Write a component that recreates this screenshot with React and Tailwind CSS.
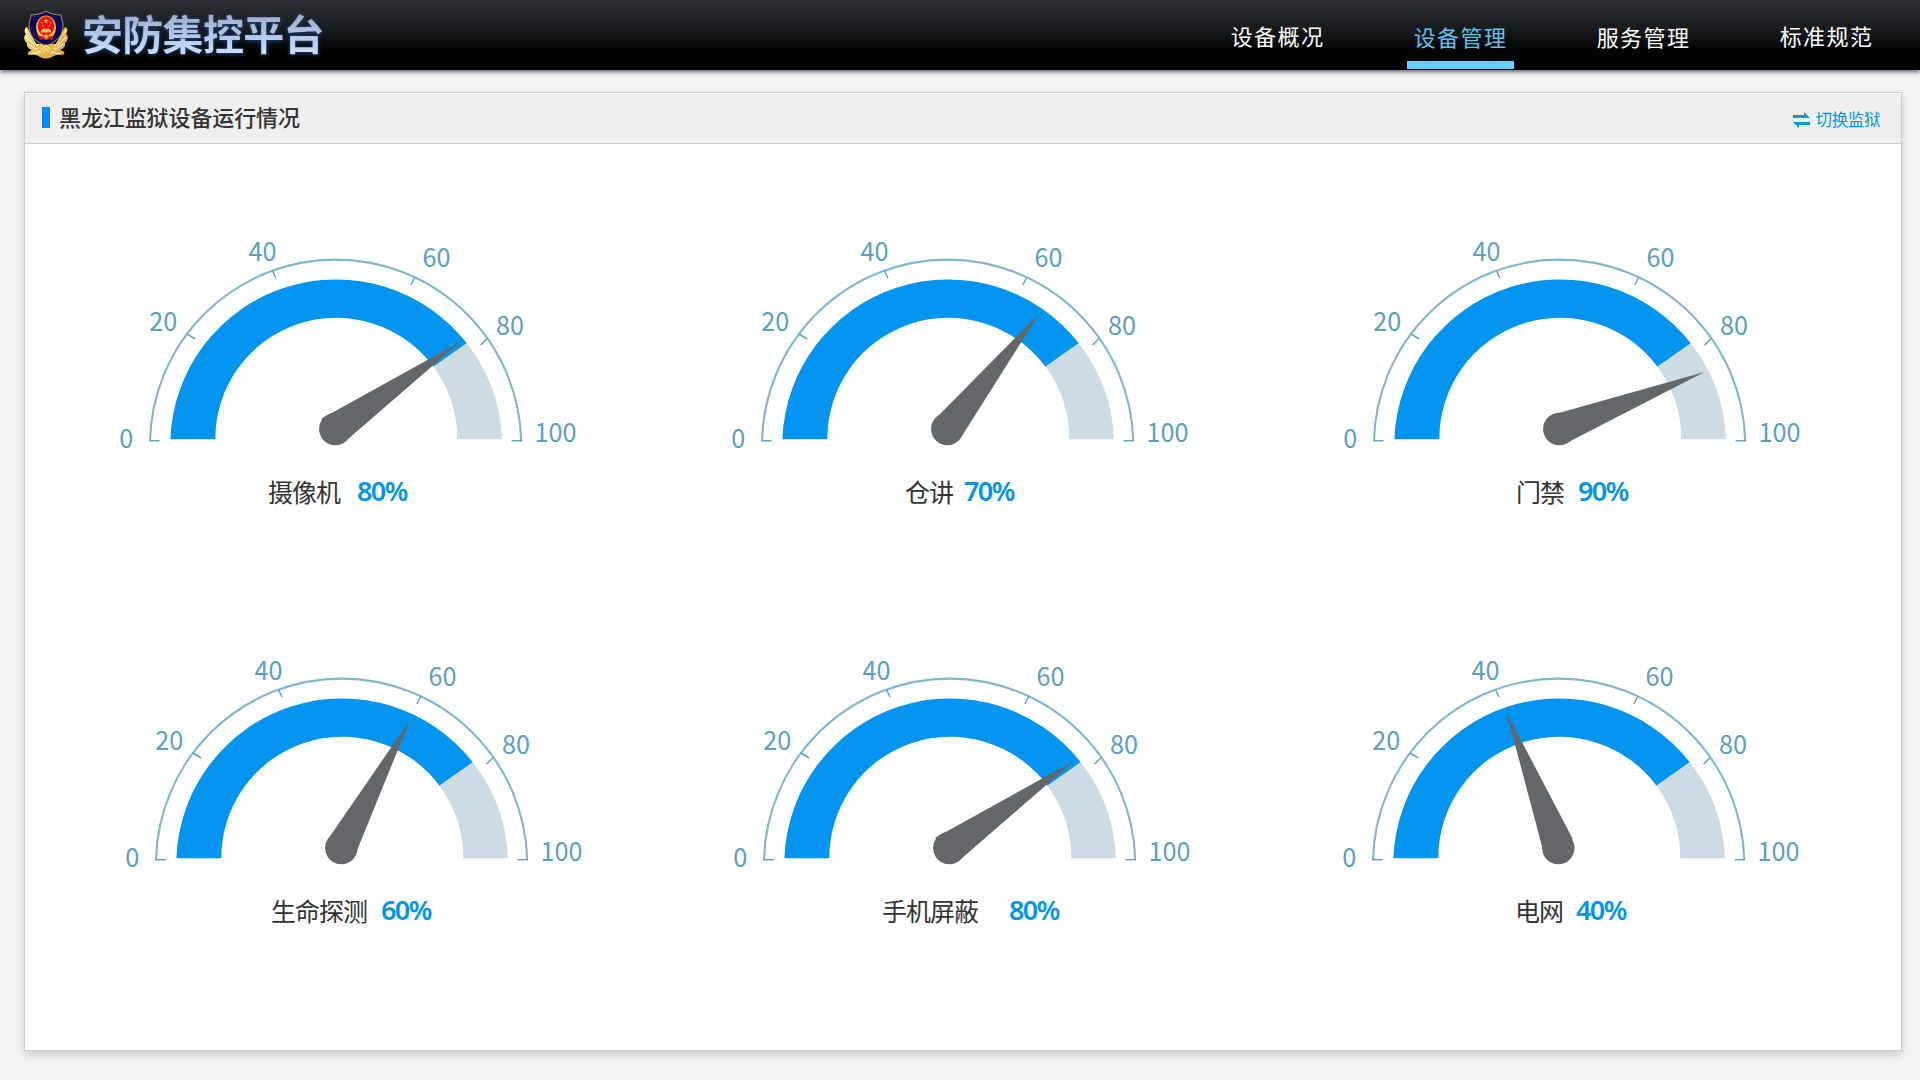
const NAV = [
  { label: '设备概况', dy: 'pt-[19px]' },
  { label: '设备管理', active: true, dy: 'pt-[20px]' },
  { label: '服务管理', dy: 'pt-[20px]' },
  { label: '标准规范', dy: 'pt-[19px]' },
];

const GAUGES = [
  { name: '摄像机', value: '80%', shift: 'ml-0', pad: 'pl-[168px]', gap: 'gap-[17px]', needle: 'M221.3 198.7 L360 122 L247.5 219.5 Z' },
  { name: '仓讲', value: '70%', shift: 'ml-0', pad: 'pl-[193px]', gap: 'gap-[11px]', needle: 'M224.6 197.5 L327.3 93.5 L250.3 215.5 Z' },
  { name: '门禁', value: '90%', shift: 'ml-0', pad: 'pl-[192px]', gap: 'gap-[14px]', needle: 'M234 193.2 L380.5 152 L245 221.8 Z' },
  { name: '生命探测', value: '60%', shift: 'ml-[6px]', pad: 'pl-[165px]', gap: 'gap-[14px]', needle: 'M223 198.8 L304 81 L251.4 210.5 Z' },
  { name: '手机屏蔽', value: '80%', shift: 'ml-[2px]', pad: 'pl-[168px]', gap: 'gap-[31px]', needle: 'M221.3 198.7 L360 122 L247.5 219.5 Z' },
  { name: '电网', value: '40%', shift: '-ml-[1px]', pad: 'pl-[192px]', gap: 'gap-[13px]', needle: 'M219.8 210.5 L183.5 73.5 L249.8 200 Z' },
];

const TICKS = [
  { t: '0', x: 19.2, y: 227.6, w: 14 },
  { t: '20', x: 49.3, y: 110.6, w: 28 },
  { t: '40', x: 148.5, y: 41, w: 28 },
  { t: '60', x: 322.6, y: 47, w: 28 },
  { t: '80', x: 396, y: 114.6, w: 28 },
  { t: '100', x: 434.4, y: 221.6, w: 42 },
];

function Emblem() {
  return (
    <svg className="block h-[50px] w-[46px]" viewBox="0 0 46 50">
      <defs>
        <linearGradient id="gold" x1="0" y1="0" x2="1" y2="1">
          <stop offset="0" stopColor="#fff0b0" />
          <stop offset="0.5" stopColor="#f0c050" />
          <stop offset="1" stopColor="#d79d3c" />
        </linearGradient>
      </defs>
      <path d="M4 17 C1 18 1 22 3 24 C0 26 1 31 4 33 C3 35 5 39 9 40 C4 42 4 44 6 45 C11 44 14 45 17 47 C21 49 25 49 29 47 C32 45 36 44 40 45 C43 43 41 41 37 40 C41 39 43 35 42 33 C45 31 46 26 43 24 C45 21 45 18 42 17 L33 34 L13 34 Z" fill="url(#gold)" />
      <path d="M3 20 L14 36 M3 27 L15 39 M6 34 L17 42 M43 20 L32 36 M43 27 L31 39 M40 34 L29 42 M8 44 L19 42 M38 44 L27 42" stroke="#fff3c4" strokeWidth="1.1" fill="none" />
      <path d="M5 23 L14 38 M5 31 L16 41 M41 23 L32 38 M41 31 L30 41" stroke="#b9781f" strokeWidth=".5" fill="none" />
      <path d="M23 1 C19 4 12 5 8 5 C8 9 6 11 6 15 C6 25 11 31 23 36 C35 31 40 25 40 15 C40 11 38 9 38 5 C34 5 27 4 23 1 Z" fill="#06065c" stroke="#c99643" strokeWidth="1" />
      <ellipse cx="23" cy="17.5" rx="10" ry="12" fill="#f2c04c" />
      <ellipse cx="23" cy="16" rx="8.3" ry="9.7" fill="#f20d0d" />
      <path d="M23 8 L23.7 10 L25.6 10.1 L24.1 11.4 L24.6 13.3 L23 12.2 L21.4 13.3 L21.9 11.4 L20.4 10.1 L22.3 10 Z" fill="#f8c648" />
      <path d="M17.8 12 h1.3 v1.3 h-1.3 Z M27 12 h1.3 v1.3 h-1.3 Z M19 15 h1.2 v1.2 h-1.2 Z M25.9 15 h1.2 v1.2 h-1.2 Z" fill="#f8c648" />
      <path d="M18 20.5 L20 18.8 H26 L28 20.5 V22.5 H18 Z" fill="#f8c648" />
      <path d="M15 25 C18 27 28 27 31 25 L29 30 C27 28.5 19 28.5 17 30 Z" fill="#e01512" />
      <circle cx="23" cy="26.5" r="2.4" fill="#f5cc55" stroke="#d6221a" strokeWidth=".8" />
      <path d="M16 39 L23 34 L30 39 L27 43 H19 Z" fill="#e9b94c" />
      <path d="M18 39 L23 36 L28 39 M20 41.5 L23 39 L26 41.5" stroke="#fff0b8" strokeWidth="1" fill="none" />
    </svg>
  );
}

function Gauge({ name, value, shift, pad, gap, needle }) {
  return (
    <div className={`w-[500px] ${shift}`}>
      <svg className="block h-[240px] w-[500px]" viewBox="0 0 500 240">
        <path d="M115.3 219.3 A121 121 0 0 1 333.5 146.7 L366.8 123.3 A165.8 165.8 0 0 0 70.4 219.3 Z" fill="#0294ef" />
        <path d="M357.2 219.3 A121 121 0 0 0 333.5 146.7 L366.8 123.3 A165.8 165.8 0 0 1 401.9 219.3 Z" fill="#cddbe5" />
        <g fill="none" stroke="#62a4c1">
          <path d="M50 221 A185.65 185.65 0 0 1 421.2 221" strokeWidth="2.1" strokeOpacity="0.8" />
          <path d="M49.2 220.7 H59.5 M411.5 220.7 H422" strokeWidth="1.6" />
          <path d="M87 114 L95.3 119 M172.3 50.5 L176 58 M314.5 58 L310.8 65 M387 118.7 L380.5 125" strokeWidth="1.5" />
        </g>
        <g fill="#5b9fbe" fontSize="26" fontFamily='"Noto Sans CJK SC", sans-serif'>
          {TICKS.map((k) => (
            <text key={k.t} x={k.x} y={k.y} textLength={k.w} lengthAdjust="spacingAndGlyphs">{k.t}</text>
          ))}
        </g>
        <g fill="#636769">
          <circle cx="235.3" cy="209" r="16.2" />
          <path d={needle} />
        </g>
      </svg>
      <div className={`flex h-[62px] items-center ${pad} ${gap}`}>
        <span className="text-[25px] leading-[60px] tracking-[-1px] text-[#333333]">{name}</span>
        <span className="font-['Noto_Sans','Noto_Sans_CJK_SC',sans-serif] text-[27px] leading-[60px] font-semibold tracking-[-1.6px] text-[#0294ef]">{value}</span>
      </div>
    </div>
  );
}

export default function App() {
  return (
    <div className="flex h-[1080px] w-[1920px] flex-col overflow-hidden bg-[#f3f3f3] font-['Noto_Sans_CJK_SC',sans-serif]">
      <header className="flex h-[70px] shrink-0 bg-linear-to-b from-[#2e3236] via-[#131517] to-black pl-[23px] shadow-[0_2px_4px_#5f6878]">
        <div className="pt-[10px]"><Emblem /></div>
        <h1 className="ml-[13px] h-[70px] bg-linear-to-b from-[#a3b1cf] from-25% via-[#b4c6e6] via-50% to-[#c9dcfb] to-75% bg-clip-text text-[41px] leading-[65px] font-bold tracking-[-0.7px] text-transparent drop-shadow-[0_1px_2px_#17467e]">安防集控平台</h1>
        <nav className="ml-auto flex gap-[76px] pr-[40px]">
          {NAV.map((n) => (
            <a key={n.label} className={`flex h-[70px] w-[107px] flex-col items-center whitespace-nowrap ${n.dy} text-[22px] leading-[32px] tracking-[1.4px] ${n.active ? 'text-[#5bc5f2]' : 'text-white'}`}>
              {n.label}
              {n.active && <i className="mt-[9px] block h-[8px] w-[107px] shrink-0 bg-[#66ceff]" />}
            </a>
          ))}
        </nav>
      </header>
      <main className="mx-[24px] mt-[22px] flex h-[959px] w-[1878px] flex-col border border-[#cccccc] bg-white shadow-[0_4px_8px_rgba(0,0,0,0.16)]">
        <div className="flex h-[51px] shrink-0 items-center border-t border-b border-t-white border-b-[#cccccc] bg-[#efefef] pr-[21px] pl-[17px]">
          <i className="mb-[2px] block h-[21px] w-[8px] bg-[#0887ff]" />
          <h2 className="mb-[5px] ml-[9px] text-[22px] leading-[44px] font-medium tracking-[-0.1px] text-[#333333]">黑龙江监狱设备运行情况</h2>
          <a className="ml-auto flex items-center gap-[6px] text-[16.5px] leading-[24px] tracking-[-0.4px] text-[#0294ef]">
            <svg className="mt-[2px] h-[16px] w-[17px]" viewBox="0 0 17 16">
              <path d="M0 3 H11 V0 L17 6 H0 Z M17 10 H0 L6 16 V13 H17 Z" fill="#0294ef" />
            </svg>
            切换监狱
          </a>
        </div>
        <div className="grid grid-cols-[612px_612px_500px] grid-rows-[419px_300px] pt-[76px] pl-[75px]">
          {GAUGES.map((g) => (
            <Gauge key={g.name} {...g} />
          ))}
        </div>
      </main>
    </div>
  );
}
